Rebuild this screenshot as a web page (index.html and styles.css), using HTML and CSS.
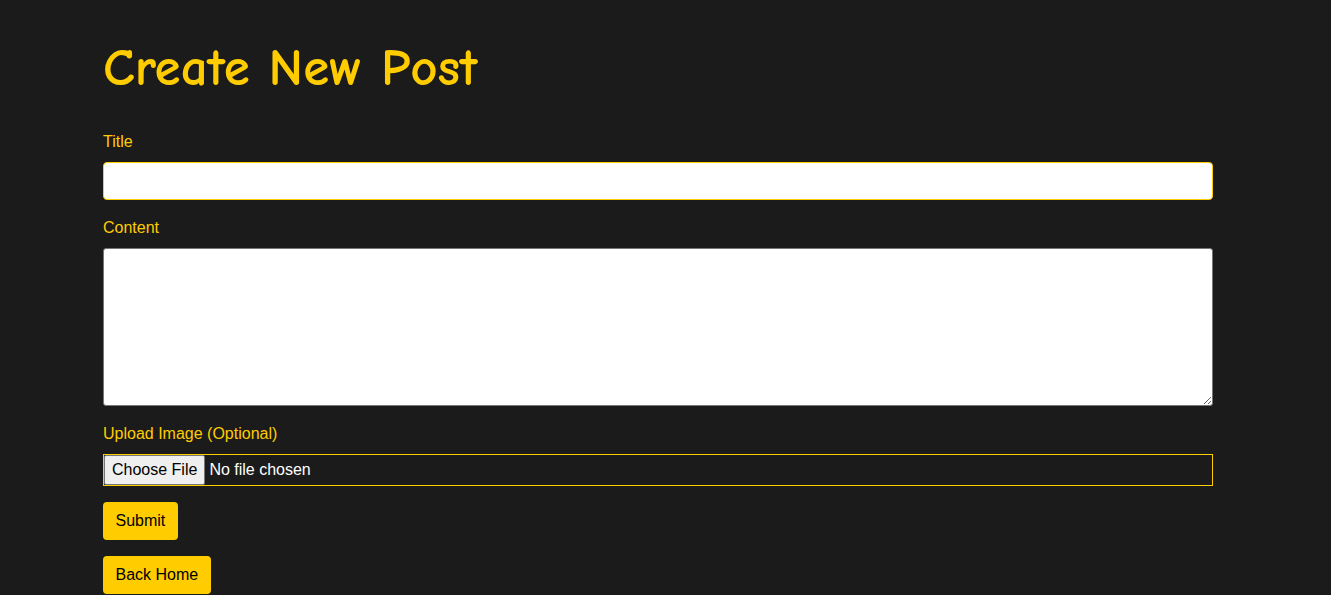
FILE: index.html
```html
<!DOCTYPE html>
<html lang="en">
<head>
<meta charset="utf-8">
<title>Create New Post</title>
<link rel="stylesheet" href="styles.css">
</head>
<body>
<main class="container">
  <h1 class="page-title">Create New Post</h1>
  <form class="post-form">
    <label class="field-label" for="title">Title</label>
    <input class="field-input field-input--active" id="title" type="text">
    <label class="field-label" for="content">Content</label>
    <textarea class="field-textarea" id="content"></textarea>
    <label class="field-label" for="image">Upload Image (Optional)</label>
    <input class="field-file" id="image" type="file">
    <button class="btn" type="submit">Submit</button>
    <a class="btn" href="#">Back Home</a>
  </form>
</main>
</body>
</html>
```
FILE: styles.css
```css
html, body {
  margin: 0;
  padding: 0;
  background: #1b1b1b;
}
body {
  font-family: "Liberation Sans", Arial, sans-serif;
  font-size: 16px;
  color: #ffcc00;
}
.container {
  width: 1110px;
  margin-left: 103px;
  padding-top: 1px;
}
.page-title {
  font-family: "Comic Sans MS", "Comic Neue", cursive, sans-serif;
  font-size: 53px;
  font-weight: bold;
  color: #ffcc00;
  margin: 38px 0 35px;
  line-height: 58px;
}
.post-form {
  display: flex;
  flex-direction: column;
  align-items: flex-start;
}
.field-label {
  display: block;
  line-height: 20px;
  margin-bottom: 10px;
}
.field-input,
.field-textarea,
.field-file {
  box-sizing: border-box;
  width: 100%;
  margin: 0 0 18px;
  font-family: "Liberation Sans", Arial, sans-serif;
  font-size: 16px;
}
.field-input {
  height: 38px;
  border: 1px solid #767676;
  border-radius: 4px;
  background: #fff;
  padding: 0 10px;
}
.field-input--active {
  border-color: #ffcc00;
  outline: none;
}
.field-textarea {
  height: 158px;
  border: 1px solid #767676;
  border-radius: 3px;
  background: #fff;
  padding: 8px 10px;
  resize: both;
}
.field-file {
  height: 32px;
  border: 1px solid #ffcc00;
  padding: 0;
  color: #fff;
  margin-bottom: 16px;
  background: transparent;
}
.field-file::file-selector-button {
  height: 30px;
  margin: 0 4px 0 0;
  padding: 0 7px;
  font-family: "Liberation Sans", Arial, sans-serif;
  font-size: 16px;
  color: #000;
  background: #efefef;
  border: 1px solid #767676;
  border-radius: 2px;
}
.btn {
  box-sizing: border-box;
  display: inline-flex;
  align-items: center;
  height: 38px;
  padding: 0 12.5px;
  margin: 0 0 16px;
  background: #ffcc00;
  color: #000;
  border: none;
  border-radius: 4px;
  font-family: "Liberation Sans", Arial, sans-serif;
  font-size: 16px;
  text-decoration: none;
  cursor: pointer;
}
```
